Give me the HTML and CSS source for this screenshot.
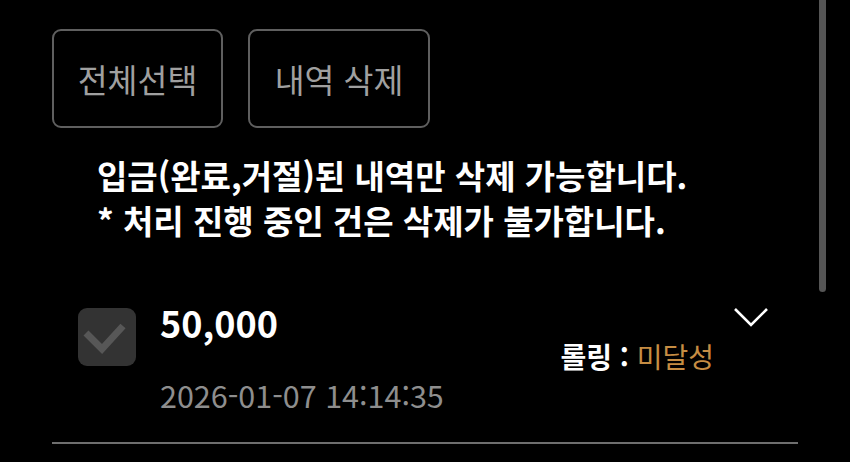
FILE: index.html
```html
<!DOCTYPE html>
<html lang="ko">
<head>
  <meta charset="UTF-8">
  <meta name="viewport" content="width=device-width, initial-scale=1.0">
  <title>입금 내역</title>
  <link rel="stylesheet" href="styles.css">
</head>
<body>
  <div class="scrollbar"></div>

  <div class="page">
    <!-- Top: action buttons -->
    <div class="actions">
      <button class="btn btn-select">전체선택</button>
      <button class="btn btn-delete">내역 삭제</button>
    </div>

    <!-- Notice -->
    <div class="notice">
      <p>입금(완료,거절)된 내역만 삭제 가능합니다.</p>
      <p>* 처리 진행 중인 건은 삭제가 불가합니다.</p>
    </div>

    <!-- History item -->
    <div class="item">
      <div class="check">
        <svg width="58" height="58" viewBox="0 0 58 58">
          <path d="M8 25 L24 41 L45 18" fill="none" stroke="#575757" stroke-width="7"/>
        </svg>
      </div>
      <div class="info">
        <div class="amount">50,000</div>
        <div class="date">2026-01-07 14:14:35</div>
      </div>
      <div class="side">
        <svg class="chevron" width="34" height="20" viewBox="0 0 34 20">
          <path d="M1 2 L17 18 L33 2" fill="none" stroke="#ffffff" stroke-width="2.6"/>
        </svg>
        <div class="rolling"><b>롤링 :</b> <span class="status">미달성</span></div>
      </div>
    </div>
  </div>
</body>
</html>
```

FILE: styles.css
```css
body {
  font-family: "Noto Sans CJK KR", "Noto Sans", sans-serif;
  background: #000;
  color: #fff;
  margin: 0;
  padding: 0;
  overflow: hidden;
}

.scrollbar {
  position: absolute;
  top: 0;
  left: 819px;
  width: 7px;
  height: 292px;
  background: #555;
  border-radius: 0 0 4px 4px;
}

.page {
  width: 746px;
  padding: 29px 0 0 52px;
}

/* Top buttons */
.actions {
  display: flex;
  gap: 25px;
}

.btn {
  height: 99px;
  background: #000;
  border: 2px solid #5f5f5f;
  border-radius: 9px;
  color: #a0a0a0;
  font-family: inherit;
  font-size: 32.5px;
  font-weight: 400;
  padding: 0;
}

.btn-select {
  width: 171px;
}

.btn-delete {
  width: 182px;
}

/* Notice */
.notice {
  margin: 25px 0 0 45px;
}

.notice p {
  margin: 0;
  font-size: 33px;
  font-weight: bold;
  line-height: 45px;
}

/* History item */
.item {
  display: flex;
  align-items: flex-start;
  padding: 57px 0 0 26px;
  height: 142px;
  border-bottom: 2px solid #6e6e6e;
  box-sizing: content-box;
}

.check {
  width: 58px;
  height: 58px;
  margin-top: 8px;
  background: #333;
  border-radius: 9px;
}

.check svg {
  display: block;
}

.info {
  margin-left: 24px;
}

.amount {
  font-size: 36px;
  font-weight: bold;
  line-height: 44px;
}

.date {
  margin-top: 33px;
  font-size: 30.5px;
  color: #8e8e8e;
  line-height: 36px;
}

.side {
  margin-left: auto;
  display: flex;
  flex-direction: column;
  align-items: flex-end;
  padding-right: 30px;
}

.chevron {
  margin-top: 7px;
}

.rolling {
  margin: 10px 54px 0 0;
  font-size: 28px;
  line-height: 38px;
}

.rolling b {
  color: #fff;
}

.status {
  color: #c68d43;
}
```
